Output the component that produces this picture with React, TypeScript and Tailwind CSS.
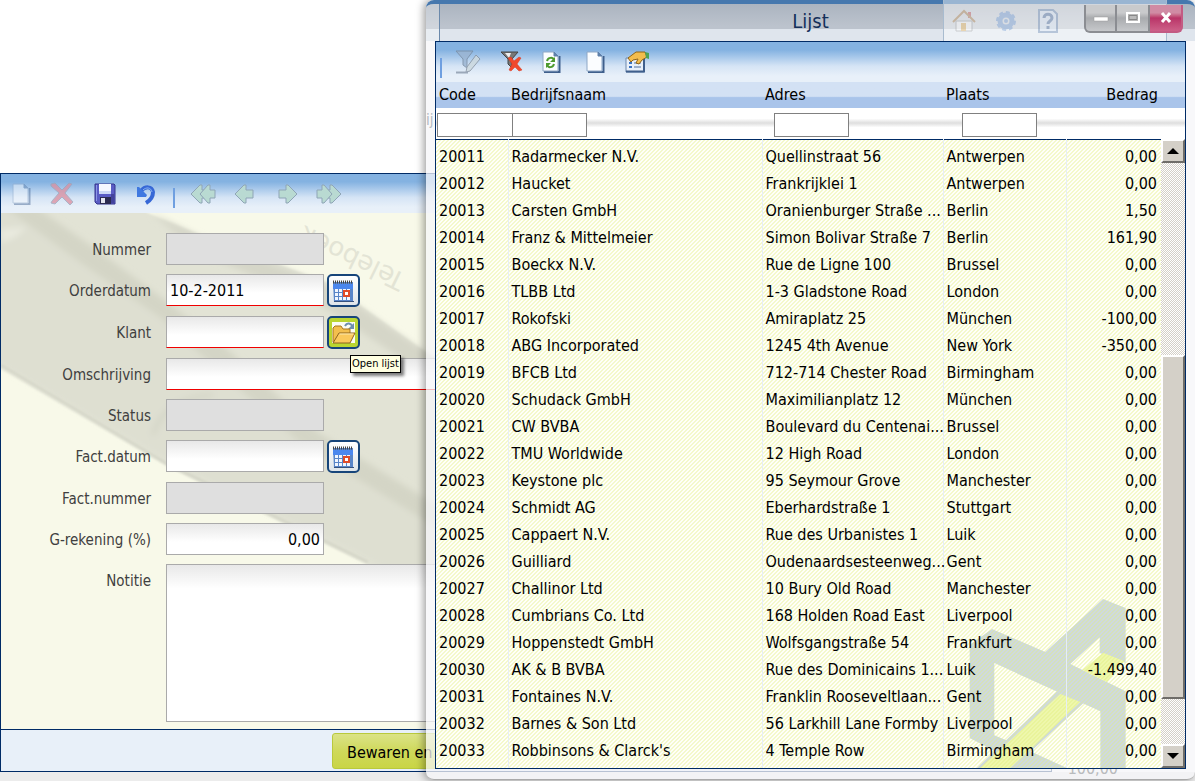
import React from 'react';

interface Customer {
  code: string;
  name: string;
  address: string;
  city: string;
  amount: string;
}

const rows: [string, string, string, string, string][] = [
  ['20011', 'Radarmecker N.V.', 'Quellinstraat 56', 'Antwerpen', '0,00'],
  ['20012', 'Haucket', 'Frankrijklei 1', 'Antwerpen', '0,00'],
  ['20013', 'Carsten GmbH', 'Oranienburger Straße ...', 'Berlin', '1,50'],
  ['20014', 'Franz & Mittelmeier', 'Simon Bolivar Straße 7', 'Berlin', '161,90'],
  ['20015', 'Boeckx N.V.', 'Rue de Ligne 100', 'Brussel', '0,00'],
  ['20016', 'TLBB Ltd', '1-3 Gladstone Road', 'London', '0,00'],
  ['20017', 'Rokofski', 'Amiraplatz 25', 'München', '-100,00'],
  ['20018', 'ABG Incorporated', '1245 4th Avenue', 'New York', '-350,00'],
  ['20019', 'BFCB Ltd', '712-714 Chester Road', 'Birmingham', '0,00'],
  ['20020', 'Schudack GmbH', 'Maximilianplatz 12', 'München', '0,00'],
  ['20021', 'CW BVBA', 'Boulevard du Centenai...', 'Brussel', '0,00'],
  ['20022', 'TMU Worldwide', '12 High Road', 'London', '0,00'],
  ['20023', 'Keystone plc', '95 Seymour Grove', 'Manchester', '0,00'],
  ['20024', 'Schmidt AG', 'Eberhardstraße 1', 'Stuttgart', '0,00'],
  ['20025', 'Cappaert N.V.', 'Rue des Urbanistes 1', 'Luik', '0,00'],
  ['20026', 'Guilliard', 'Oudenaardsesteenweg...', 'Gent', '0,00'],
  ['20027', 'Challinor Ltd', '10 Bury Old Road', 'Manchester', '0,00'],
  ['20028', 'Cumbrians Co. Ltd', '168 Holden Road East', 'Liverpool', '0,00'],
  ['20029', 'Hoppenstedt GmbH', 'Wolfsgangstraße 54', 'Frankfurt', '0,00'],
  ['20030', 'AK & B BVBA', 'Rue des Dominicains 1...', 'Luik', '-1.499,40'],
  ['20031', 'Fontaines N.V.', 'Franklin Rooseveltlaan...', 'Gent', '0,00'],
  ['20032', 'Barnes & Son Ltd', '56 Larkhill Lane Formby', 'Liverpool', '0,00'],
  ['20033', "Robbinsons & Clarck's", '4 Temple Row', 'Birmingham', '0,00'],
];

const customers: Customer[] = rows.map(([code, name, address, city, amount]) => ({ code, name, address, city, amount }));

const toolbarBg = 'bg-linear-to-b from-[#84b2e1] from-20% via-[#d5e4f5] via-60% to-[#e8f0f9] to-85%';

/* ---------- icons ---------- */

function PageIcon({ children }: { children?: React.ReactNode }) {
  return (
    <svg width="24" height="24" viewBox="0 0 24 24">
      <path d="M5 22h15.500V6" fill="none" stroke="#3f5f8c" strokeWidth="2" />
      <path d="M4 2h11l4 4v15H4z" fill="#fbfdff" stroke="#8ea7c6" />
      <path d="M15 2v4h4z" fill="#5f80aa" stroke="#5f80aa" />
      {children}
    </svg>
  );
}

function DeleteIcon() {
  return (
    <svg width="24" height="24" viewBox="0 0 24 24">
      <path d="M1 2l4-1 7 7 7-7 3 1-7 9 8 9-3 3-8-8-7 7-4-1 1-2 7-8-8-7z" fill="#dc8f9f" stroke="#9aa3b8" />
    </svg>
  );
}

function SaveIcon() {
  return (
    <svg width="24" height="24" viewBox="0 0 24 24">
      <path d="M2 2h19l1 1v19H4l-2-2z" fill="#5a5cc4" stroke="#34348c" />
      <path d="M3.500 3v16" stroke="#8c96e6" strokeWidth="1" />
      <path d="M6 2h12v10H6z" fill="#f5f8ff" />
      <path d="M6 9h12v3H6z" fill="#cdd9f5" />
      <path d="M7 15h11v7H7z" fill="#2b2b50" />
      <path d="M8 16h4v5H8z" fill="#e4e6f0" />
      <path d="M18 12h3v9h-3z" fill="#43439c" />
    </svg>
  );
}

function UndoIcon() {
  return (
    <svg width="24" height="24" viewBox="0 0 24 24">
      <path d="M7 9c4-5 11-5 12 1 0 5-2 8-7 11" fill="none" stroke="#3768d6" strokeWidth="4" />
      <path d="M9 8c3-3 8-3 9 2" fill="none" stroke="#8ab4f5" strokeWidth="1" />
      <path d="M3 5l2 0 8 8-1 2H3z" fill="#3f78e0" />
    </svg>
  );
}

function ArrowIcon({ double, flip }: { double?: boolean; flip?: boolean }) {
  return (
    <svg width="26" height="22" viewBox="0 0 26 22" className={flip ? '-scale-x-100' : ''}>
      {double ? (
        <g fill="#b9dad2" stroke="#8fa5b6">
          <path d="M1 11l9-9h2v5h3v8h-3v5h-2z" />
          <path d="M10 11l8-9h2v5h5v8h-5v5h-2z" />
        </g>
      ) : (
        <path d="M21 7h-7V2h-2l-9 9 9 9h2v-5h7z" fill="#b9dad2" stroke="#8fa5b6" />
      )}
    </svg>
  );
}

function CalendarIcon() {
  return (
    <svg width="23" height="24" viewBox="0 0 23 24">
      <path d="M1 3h20v20H2z" fill="#5985c8" />
      <path d="M1 5h20v5H1z" fill="#4b87ee" />
      <path d="M1 3h20" stroke="#444" strokeWidth="3" strokeDasharray="1 1" />
      <g fill="#f1f6ff">
        {[10, 14, 18].map(y => [3, 7, 11, 15].map(x => <path key={`${x}-${y}`} d={`M${x} ${y}h3v3h-3z`} />))}
      </g>
      <path d="M12 12h5v5h-5z" fill="#fff" stroke="#e04a28" strokeWidth="2" />
      <path d="M2 22.500h20" stroke="#35517e" />
    </svg>
  );
}

function FolderIcon() {
  return (
    <svg width="25" height="24" viewBox="0 0 25 24">
      <path d="M1 1h23v21H1z" fill="#fbfcf4" />
      <path d="M14 5c2-4 6-3 8 1" fill="none" stroke="#6e8fae" strokeWidth="2" />
      <path d="M23 2v6h-6z" fill="#6e8fae" />
      <path d="M2 21V7l2-2h6l2 3h7v4" fill="#f3bf4d" stroke="#a8741d" />
      <path d="M2 22l6-10h16l-5 10z" fill="#fbc95c" stroke="#8e641f" />
      <path d="M8.500 13h14" stroke="#fde9ae" />
    </svg>
  );
}

function FilterEditIcon() {
  return (
    <svg width="28" height="26" viewBox="0 0 28 26">
      <path d="M2 2h17l-6 8v9l-4-3v-6z" fill="#9ab4d1" stroke="#76899f" />
      <path d="M13 18L22 6l4 4-10 12-4 1z" fill="#cdd9de" stroke="#85909e" />
      <path d="M2 23.500h12" stroke="#8a98aa" strokeWidth="2" />
    </svg>
  );
}

function FilterClearIcon() {
  return (
    <svg width="24" height="24" viewBox="0 0 24 24">
      <path d="M2 2h17l-6 7v9l-4-4V9z" fill="#777" stroke="#444" />
      <path d="M6 3h6l-2 5z" fill="#eee" />
      <path d="M9 8l3-1 3 4 5-4 2 1-4 6 5 6-3 1-4-4-4 4-2-1 3-6z" fill="#f0492c" stroke="#d8371c" strokeWidth=".5" />
    </svg>
  );
}

function PropertiesIcon() {
  return (
    <svg width="28" height="26" viewBox="0 0 28 26">
      <path d="M3 9h18v14H3z" fill="#e8f0fa" stroke="#6d88ad" />
      <path d="M3 22.500h18V9" fill="none" stroke="#3f5f8c" strokeWidth="2" />
      <path d="M6 14h3M6 18h3" stroke="#3c73c2" strokeWidth="2" />
      <path d="M11 14h7M11 18h7" stroke="#9cb0cc" strokeWidth="2" />
      <path d="M5 9l8-6h9l2 5-5 3-3 4-3-1 2-4-5 1-2 2z" fill="#f3bd4d" stroke="#8f6417" />
      <path d="M22 3l4 1v6l-3-1z" fill="#4fa356" />
    </svg>
  );
}

/* ---------- order form ---------- */

const fieldBase = 'h-8 border px-[3px] text-base text-black outline-none';
const editable = 'bg-linear-to-b from-[#e8e8e8] to-white to-60%';
const labelClass = 'mr-[15px] w-[150px] shrink-0 pt-px text-right text-[15px] leading-8 text-[#404040]';

interface FieldProps {
  id: string;
  label: string;
  value?: string;
  disabled?: boolean;
  required?: boolean;
  wide?: boolean;
  right?: boolean;
  children?: React.ReactNode;
}

function Field({ id, label, value = '', disabled, required, wide, right, children }: FieldProps) {
  return (
    <div className={`flex items-start ${children ? 'h-[33px]' : 'h-8'}`}>
      <label htmlFor={id} className={labelClass}>
        {label}
      </label>
      <input
        id={id}
        defaultValue={value}
        disabled={disabled}
        className={`${fieldBase} ${disabled ? 'bg-[#dfdfdf]' : editable} ${required ? 'border-x-[#aaa] border-t-[#aaa] border-b-[#f00000]' : 'border-[#aaa]'} ${wide ? 'mr-10 flex-1' : 'w-[158px]'} ${right ? 'text-right' : ''}`}
      />
      {children}
    </div>
  );
}

function CalendarButton({ label }: { label: string }) {
  return (
    <button
      type="button"
      aria-label={label}
      className="ml-[3px] flex h-[33px] w-[33px] items-center justify-center rounded-[5px] border-2 border-[#17457a] bg-linear-to-b from-white to-[#dfe5ea]"
    >
      <CalendarIcon />
    </button>
  );
}

function PaperBackdrop() {
  return (
    <svg className="absolute inset-0" width="1050" height="516" aria-hidden="true">
      <defs>
        <filter id="soft">
          <feGaussianBlur stdDeviation="3" />
        </filter>
        <filter id="edge">
          <feGaussianBlur stdDeviation="1" />
        </filter>
      </defs>
      <path d="M-10-20H110L147 0 200 22 328 70 440 150 700 330V560L367 352 167 254-10 150z" fill="#e2e3d5" filter="url(#edge)" />
      <g filter="url(#soft)">
        <path d="M-20-20H20L85 46 165 105 220 155 310 240 440 320V390L367 346 167 248-10 146z" fill="#dedfd1" />
        <path d="M150 0L200 24 328 73 440 150V172L320 92 200 40z" fill="#d5d6c8" />
        <path d="M5-5H36L95 36 165 88 225 135 315 218 440 295V318L305 235 215 155 160 105 80 50z" fill="#d4d5c6" />
        <path d="M0 16L26 14 14 24 0 30z" fill="#e9eadf" />
        <path d="M152 222c6-22 26-38 60-40" fill="none" stroke="#d3d4c6" strokeWidth="4" />
      </g>
      <path d="M0 152L167 251 367 349" fill="none" stroke="#d3d4c6" strokeWidth="2" filter="url(#edge)" />
      <text transform="translate(406 62) rotate(206)" className="fill-[#e3e4d5] font-['DejaVu_Sans',sans-serif] text-[26px]">
        Teleboek
      </text>
    </svg>
  );
}

function OrderForm() {
  return (
    <section className="w-[88%] border border-[#002b66]">
      <div className={`flex h-[39px] items-center ${toolbarBg}`}>
        <button aria-label="Nieuw" className="ml-2 opacity-45"><PageIcon /></button>
        <button aria-label="Verwijderen" className="ml-[17px] opacity-75"><DeleteIcon /></button>
        <button aria-label="Bewaren" className="ml-[19px]"><SaveIcon /></button>
        <button aria-label="Ongedaan maken" className="ml-[17px]"><UndoIcon /></button>
        <span className="mt-2 ml-[15px] h-5 w-[2px] bg-[#6f9fe0]" />
        <button aria-label="Eerste" className="ml-[15px]"><ArrowIcon double /></button>
        <button aria-label="Vorige" className="ml-4"><ArrowIcon /></button>
        <button aria-label="Volgende" className="ml-4"><ArrowIcon flip /></button>
        <button aria-label="Laatste" className="ml-4"><ArrowIcon double flip /></button>
      </div>

      <div className="relative overflow-hidden bg-[#f8f9e9]">
        <PaperBackdrop />
        <form className="relative flex flex-col gap-[9px] pt-5 pb-[7px]">
          <Field id="nummer" label="Nummer" disabled />
          <Field id="orderdatum" label="Orderdatum" value="10-2-2011" required>
            <CalendarButton label="Kies orderdatum" />
          </Field>
          <Field id="klant" label="Klant" required>
            <div className="relative z-10 ml-[3px]">
              <button
                type="button"
                aria-label="Klant zoeken"
                className="flex h-[33px] w-[33px] items-center justify-center rounded-[5px] border-2 border-[#17457a] bg-[#b9d531]"
              >
                <FolderIcon />
              </button>
              <span className="absolute top-[39px] left-[23px] border border-black bg-[#ffffe1] px-px text-[11px] leading-4 whitespace-nowrap text-black shadow-[3px_3px_3px_rgba(0,0,0,0.5)]">
                Open lijst
              </span>
            </div>
          </Field>
          <Field id="omschrijving" label="Omschrijving" required wide />
          <Field id="status" label="Status" disabled />
          <Field id="factdatum" label="Fact.datum">
            <CalendarButton label="Kies factuurdatum" />
          </Field>
          <Field id="factnummer" label="Fact.nummer" disabled />
          <Field id="grekening" label="G-rekening (%)" value="0,00" right />
          <div className="flex items-start">
            <label htmlFor="notitie" className={labelClass}>
              Notitie
            </label>
            <textarea id="notitie" className="mr-10 h-[158px] flex-1 resize-none border border-[#aaa] bg-linear-to-b from-[#e8e8e8] to-white to-15% outline-none" />
          </div>
        </form>
      </div>

      <div className="flex h-[42px] items-center border-t border-[#002b66] bg-[#e8f0f9] pl-[331px]">
        <button className="h-9 w-[170px] rounded-[3px] border border-[#b9c93c] bg-linear-to-b from-[#dbe387] via-[#cfd95a] to-[#c9d545] pt-1 pl-[14px] text-left text-base text-black">
          Bewaren en
        </button>
      </div>
    </section>
  );
}

/* ---------- list window ---------- */

function Watermark() {
  return (
    <svg className="absolute right-[59px] bottom-0" width="157" height="169" viewBox="116 53 471 507" aria-hidden="true">
      <g fill="#b8c8d0">
        <path d="M118 190L185 143 345 212 518 53 586 80V245L508 215V168L420 248 586 330V560H510V390L192 245V462L235 480 205 515 118 470z" />
        <path d="M300 510L410 560H245z" />
        <path d="M380 330L460 365 245 562 140 560z" />
      </g>
      <path d="M518 214L582 240 530 302 456 266zM390 338L450 362 240 560H150z" fill="#e6f486" />
    </svg>
  );
}

function WindowButtons() {
  const base = 'flex h-7 w-[33px] items-center justify-center border-2 border-t-0';
  const grey = 'border-[#8b8d92] bg-linear-to-b from-[#c9cacc] from-30% via-[#a9abae] via-50% to-[#c6c8cb]';
  return (
    <div className="absolute top-[5px] right-[12px] flex">
      <button aria-label="Minimaliseren" className={`${base} rounded-bl-md ${grey}`}>
        <svg width="16" height="14"><path d="M1 6h14v4H1z" fill="#fff" stroke="#999" strokeWidth=".5" /></svg>
      </button>
      <button aria-label="Maximaliseren" className={`${base} border-l-0 ${grey}`}>
        <svg width="18" height="14"><path d="M3 2h12v9H3z" fill="#bbb" stroke="#fff" strokeWidth="2" /><path d="M5 4.500h8v4H5z" fill="none" stroke="#888" /></svg>
      </button>
      <button aria-label="Sluiten" className={`${base} rounded-br-md border-l-0 border-[#c35b83] bg-linear-to-b from-[#d08ba4] from-30% via-[#b93468] via-50% to-[#cd6089]`}>
        <svg width="16" height="14"><path d="M4 2l8 9M12 2l-8 9" stroke="#fff" strokeWidth="3" /></svg>
      </button>
    </div>
  );
}

/* parts of the application header that shine through the glass title bar */
function GlassGhosts() {
  return (
    <div className="absolute top-0 right-7 flex h-[41px] w-[224px] items-center border-x border-[#a9bccf] bg-white/45" aria-hidden="true">
      <svg width="24" height="24" viewBox="0 0 24 24" className="ml-2 opacity-35">
        <path d="M4 12h16v10H4z" fill="#fff" stroke="#888" />
        <path d="M16 3h3v6h-3z" fill="#b33" />
        <path d="M1 13L12 2l11 11" fill="none" stroke="#a06a28" strokeWidth="2" />
        <path d="M9 14h5v8H9z" fill="#e0a437" />
      </svg>
      <svg width="22" height="22" viewBox="0 0 22 22" className="ml-[19px] opacity-35">
        <circle cx="11" cy="11" r="6" fill="none" stroke="#5f8fd0" strokeWidth="5" />
        <circle cx="11" cy="11" r="9" fill="none" stroke="#5f8fd0" strokeWidth="2" strokeDasharray="4 3" />
        <circle cx="11" cy="11" r="2" fill="#5f8fd0" />
      </svg>
      <svg width="22" height="24" viewBox="0 0 22 24" className="ml-5 opacity-40">
        <path d="M2 1h14l4 4v18H2z" fill="#dce8f8" stroke="#6584b0" strokeWidth="2" />
        <path d="M7 9c0-5 8-5 8 0 0 3-4 3-4 6M11 17v3" fill="none" stroke="#46689c" strokeWidth="3" />
      </svg>
    </div>
  );
}

function ScrollBar() {
  const raised = 'border-2 border-t-white border-r-[#6f6d69] border-b-[#6f6d69] border-l-white bg-[#d4d0c8]';
  return (
    <div className="absolute top-[97px] right-0 bottom-0 flex w-6 flex-col bg-[repeating-conic-gradient(#d4d0c8_0%_25%,#ffffff_0%_50%)] bg-size-[2px_2px]">
      <button aria-label="Omhoog" className={`flex h-6 items-center justify-center ${raised}`}>
        <svg width="12" height="6"><path d="M6 0l6 6H0z" /></svg>
      </button>
      <span className="flex-[193]" />
      <span className={`flex-[343] ${raised}`} />
      <span className="flex-[45]" />
      <button aria-label="Omlaag" className={`flex h-6 items-center justify-center ${raised}`}>
        <svg width="12" height="6"><path d="M0 0h12l-6 6z" /></svg>
      </button>
    </div>
  );
}

function FilterInput({ label, className = '' }: { label: string; className?: string }) {
  return <input aria-label={label} className={`block h-6 w-[75px] border border-[#808080] bg-white px-1 outline-none ${className}`} />;
}

function ListWindow() {
  const cell = 'border-r border-[#e6eef6] px-[3px] whitespace-nowrap';
  const spacer = <tr className="h-1"><td className={cell} /><td className={cell} /><td className={cell} /><td className={cell} /><td /></tr>;
  return (
    <section className="absolute top-0 right-0 left-[426px] rounded-lg border-b border-[#aaa] bg-[#f6f6f8]/75 px-[9px] pb-[10px] shadow-[-2px_0_8px_rgba(0,0,0,0.4)]">
      <div className="absolute inset-x-0 top-0 h-[41px] overflow-hidden rounded-t-lg border-t-4 border-[#4678ae] bg-linear-to-b from-[#abb4c0] to-[#bcc3cd] to-60%" aria-hidden="true">
        <div className="absolute inset-x-0 bottom-0 h-3 bg-[#dfe5ed]" />
        <div className="absolute inset-y-0 left-0 w-[14px] border-r border-[#6b89ab] bg-white/30" />
      </div>
      <GlassGhosts />
      <span className="absolute top-28 left-0 text-[15px] leading-4 text-[#b4bac2]" aria-hidden="true">ij</span>
      <span className="absolute right-[77px] bottom-0 text-base leading-5 text-[#b9bbbd]" aria-hidden="true">100,00</span>
      <header className="relative flex h-[41px] items-center justify-center">
        <h1 className="text-xl text-[#14305a]">Lijst</h1>
      </header>
      <WindowButtons />

      <div className="relative border border-[#002b66] bg-[#fffff6]">
        <div className={`flex h-10 items-center ${toolbarBg}`}>
          <span className="mt-3 ml-1 h-5 w-[2px] bg-[#6f9fe0]" />
          <button aria-label="Filter bewerken" className="ml-3 opacity-80"><FilterEditIcon /></button>
          <button aria-label="Filter wissen" className="ml-[17px]"><FilterClearIcon /></button>
          <button aria-label="Vernieuwen" className="ml-4">
            <PageIcon>
              <path d="M8 11c1-4 6-4 7-1M15 14c-1 4-6 4-7 1" fill="none" stroke="#4e9a2e" strokeWidth="2" />
              <path d="M16 7v5h-5zM7 18v-5h5z" fill="#4e9a2e" />
            </PageIcon>
          </button>
          <button aria-label="Nieuw" className="ml-5"><PageIcon /></button>
          <button aria-label="Eigenschappen" className="ml-4"><PropertiesIcon /></button>
        </div>

        <Watermark />
        <table className="relative w-full table-fixed border-collapse text-left text-base text-black">
          <colgroup>
            <col className="w-[72px]" />
            <col />
            <col className="w-[181px]" />
            <col className="w-[123px]" />
            <col className="w-[119px]" />
          </colgroup>
          <thead>
            <tr className="h-[26px] bg-linear-to-b from-[#d3e1f4] from-55% to-[#a9c4ea] to-60% leading-[26px]">
              <th className="px-[3px] font-normal">Code</th>
              <th className="px-[3px] font-normal">Bedrijfsnaam</th>
              <th className="px-[3px] font-normal">Adres</th>
              <th className="px-[3px] font-normal">Plaats</th>
              <th className="pr-[27px] text-right font-normal">Bedrag</th>
            </tr>
            <tr className="h-[31px] border-b border-[#002b66] bg-white bg-linear-to-b from-white from-35% via-[#dedede] via-50% to-white to-65%">
              <td className="pt-[3px] pl-px"><FilterInput label="Filter code" className="border-r-0" /></td>
              <td className="pt-[3px] pl-1"><FilterInput label="Filter bedrijfsnaam" /></td>
              <td className="pt-[3px] pl-3"><FilterInput label="Filter adres" /></td>
              <td className="pt-[3px] pl-[19px]"><FilterInput label="Filter plaats" /></td>
              <td />
            </tr>
          </thead>
          <tbody className="bg-[linear-gradient(135deg,#ecf4ac90_0_25%,#ffffff50_25%_50%,#ecf4ac90_50%_75%,#ffffff50_75%)] bg-size-[4px_4px]">
            {spacer}
            {customers.map(c => (
              <tr key={c.code} className="h-[27px] leading-[27px]">
                <td className={cell}>{c.code}</td>
                <td className={cell}>{c.name}</td>
                <td className={cell}>{c.address}</td>
                <td className={cell}>{c.city}</td>
                <td className="pr-7 text-right">{c.amount}</td>
              </tr>
            ))}
            {spacer}
          </tbody>
        </table>
        <ScrollBar />
      </div>
    </section>
  );
}

export default function App() {
  return (
    <main className="relative min-h-screen overflow-hidden bg-white font-['DejaVu_Sans_Condensed','Noto_Sans',sans-serif]">
      <div className="pt-[173px]">
        <OrderForm />
        <div className="h-[9px] bg-[#ececec]" />
      </div>
      <ListWindow />
    </main>
  );
}
